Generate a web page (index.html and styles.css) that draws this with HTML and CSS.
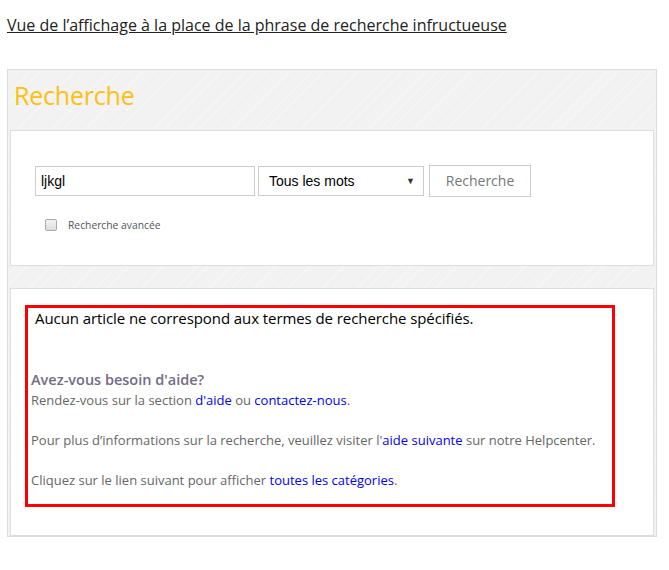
FILE: index.html
```html
<!DOCTYPE html>
<html lang="fr">
<head>
<meta charset="utf-8">
<title>Recherche</title>
<link rel="stylesheet" href="styles.css">
</head>
<body>
<p class="caption">Vue de l’affichage à la place de la phrase de recherche infructueuse</p>
<div class="frame">
  <h1 class="frame-title">Recherche</h1>
  <div class="panel search-panel">
    <div class="search-row">
      <div class="field">ljkgl</div>
      <div class="select"><span>Tous les mots</span><span class="arrow">▼</span></div>
      <div class="button">Recherche</div>
    </div>
    <label class="advanced"><span class="checkbox"></span><span>Recherche avancée</span></label>
  </div>
  <div class="strip"></div>
  <div class="panel results-panel">
    <div class="notice">
      <p class="notice-head">Aucun article ne correspond aux termes de recherche spécifiés.</p>
      <h2 class="help-title">Avez-vous besoin d'aide?</h2>
      <p class="help-line">Rendez-vous sur la section <a href="#">d'aide</a> ou <a href="#">contactez-nous</a>.</p>
      <p class="help-line">Pour plus d’informations sur la recherche, veuillez visiter l'<a href="#">aide suivante</a> sur notre Helpcenter.</p>
      <p class="help-line">Cliquez sur le lien suivant pour afficher <a href="#">toutes les catégories</a>.</p>
    </div>
  </div>
</div>
</body>
</html>
```

FILE: styles.css
```css
* { box-sizing: border-box; }
html, body { margin: 0; background: #fff; }
body {
  padding: 15px 13px 0 7px;
  font-family: "Open Sans", "Liberation Sans", sans-serif;
  color: #333;
}
.caption {
  margin: 0;
  font-size: 16px;
  line-height: 20px;
  color: #222;
  text-decoration: underline;
}
.frame {
  margin-top: 34px;
  width: 650px;
  height: 468px;
  border: 1px solid #ddd;
  padding: 0 2px;
  background-color: #f2f2f2;
  background-image: repeating-linear-gradient(135deg, rgba(255,255,255,0.3) 0 1px, transparent 1px 8px);
}
.frame-title {
  margin: 0;
  padding: 9px 0 0 4px;
  height: 60px;
  font-size: 25px;
  font-weight: 400;
  line-height: 32px;
  color: #fdc010;
  letter-spacing: -0.2px;
}
.panel {
  background: #fff;
  border: 1px solid #ddd;
}
.search-panel {
  height: 136px;
  padding: 34px 0 0 24px;
}
.search-row {
  display: flex;
  align-items: center;
}
.field {
  width: 220px;
  height: 30px;
  border: 1px solid #ccc;
  font-family: "Liberation Sans", Arial, sans-serif;
  font-size: 14px;
  line-height: 28px;
  padding-left: 5px;
  color: #000;
}
.select {
  margin-left: 3px;
  width: 166px;
  height: 30px;
  border: 1px solid #ccc;
  font-family: "Liberation Sans", Arial, sans-serif;
  font-size: 14px;
  line-height: 28px;
  padding: 0 8px 0 10px;
  color: #000;
  display: flex;
  justify-content: space-between;
}
.arrow { font-size: 9px; color: #333; }
.button {
  margin-left: 5px;
  width: 102px;
  height: 32px;
  border: 1px solid #ccc;
  font-size: 14px;
  line-height: 30px;
  text-align: center;
  color: #777;
}
.advanced {
  display: flex;
  align-items: center;
  margin: 21px 0 0 10px;
  font-size: 10.3px;
  color: #555;
}
.checkbox {
  width: 12px;
  height: 12px;
  border: 1px solid #aaa;
  border-radius: 2px;
  background: linear-gradient(#f4f4f4, #dcdcdc);
  margin-right: 11px;
}
.strip { height: 22px; }
.results-panel {
  height: 248px;
  padding: 16px 0 0 14px;
}
.notice {
  width: 590px;
  height: 202px;
  border: 3px solid #f00;
  padding: 0 3px 0 3px;
}
.notice-head {
  margin: 0 0 0 4px;
  font-size: 15px;
  line-height: 20px;
  color: #000;
  letter-spacing: -0.08px;
}
.help-title {
  margin: 42px 0 0 0;
  font-size: 14.5px;
  font-weight: 600;
  line-height: 20px;
  color: #736c88;
}
.help-line {
  margin: 0 0 20px 0;
  font-size: 13px;
  line-height: 20px;
  color: #666;
}
.help-line a { color: #0000ee; text-decoration: none; }
```
